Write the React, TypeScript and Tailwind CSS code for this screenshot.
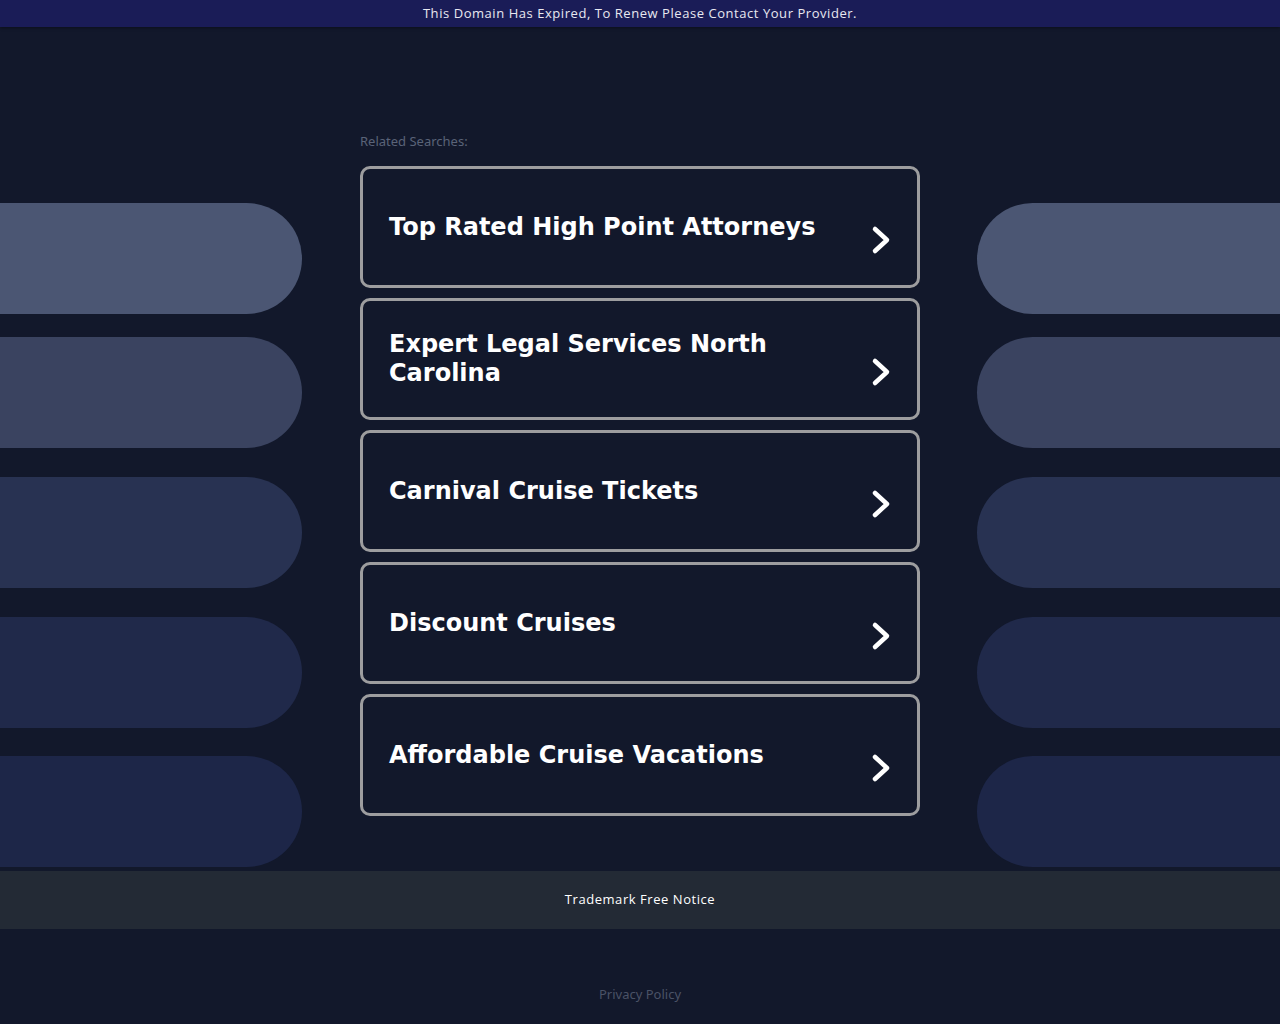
const searches = [
  'Top Rated High Point Attorneys',
  'Expert Legal Services North Carolina',
  'Carnival Cruise Tickets',
  'Discount Cruises',
  'Affordable Cruise Vacations',
];

// decorative side pills, top margin + fill colour
const pills = [
  { mt: 'mt-[176px]', bg: 'bg-[#4b5673]' },
  { mt: 'mt-[23px]', bg: 'bg-[#3a4360]' },
  { mt: 'mt-[29px]', bg: 'bg-[#283252]' },
  { mt: 'mt-[29px]', bg: 'bg-[#20294a]' },
  { mt: 'mt-[28px]', bg: 'bg-[#1d2648]' },
];

function Chevron() {
  return (
    <svg width="24" height="30" viewBox="0 0 24 30" className="shrink-0 mt-[26px]">
      <polyline
        points="6,4 18,15 6,26"
        fill="none"
        stroke="#ffffff"
        strokeWidth="4.5"
        strokeLinecap="round"
        strokeLinejoin="round"
      />
    </svg>
  );
}

function SidePills({ side }: { side: 'left' | 'right' }) {
  return (
    <div className="flex flex-col">
      {pills.map((p, i) => (
        <div
          key={i}
          className={`${p.mt} ${p.bg} h-[111px] ${side === 'left' ? 'rounded-r-full' : 'rounded-l-full'}`}
        />
      ))}
    </div>
  );
}

export default function App() {
  return (
    <div className="min-h-screen bg-[#12182b] flex flex-col">
      <div className="h-[27px] bg-[#1a1c57] flex items-center justify-center shadow-[0_1px_3px_rgba(0,0,0,0.4)]">
        <p className="text-[13px] font-medium tracking-[0.55px] text-[#e8e8f0] font-['Open_Sans',sans-serif]">
          This Domain Has Expired, To Renew Please Contact Your Provider.
        </p>
      </div>

      <div className="flex h-[844px]">
        <div className="w-[302px] shrink-0">
          <SidePills side="left" />
        </div>

        <div className="w-[560px] shrink-0 ml-[58px] pt-[104px]">
          <p className="text-[13px] text-[#5a6378] font-['Noto_Sans',sans-serif] leading-[20px]">
            Related Searches:
          </p>
          <div className="mt-[15px] flex flex-col gap-[10px]">
            {searches.map((s) => (
              <a
                key={s}
                href="#"
                className="h-[122px] border-[3px] border-[#9d9d9f] rounded-[10px] bg-[#12182b] flex items-center pl-[26px] pr-[24px]"
              >
                <span className="flex-1 text-white font-bold text-[24px] leading-[29px] font-['DejaVu_Sans',sans-serif] pr-6">
                  {s}
                </span>
                <Chevron />
              </a>
            ))}
          </div>
        </div>

        <div className="flex-1 ml-[57px]">
          <SidePills side="right" />
        </div>
      </div>

      <div className="h-[58px] bg-[#232a35] flex items-center justify-center">
        <span className="text-[13px] font-medium tracking-[0.55px] text-white font-['Open_Sans',sans-serif]">
          Trademark Free Notice
        </span>
      </div>

      <div className="flex-1 flex justify-center pt-[56px]">
        <a href="#" className="text-[13px] text-[#4a5266] font-['Noto_Sans',sans-serif]">
          Privacy Policy
        </a>
      </div>
    </div>
  );
}
